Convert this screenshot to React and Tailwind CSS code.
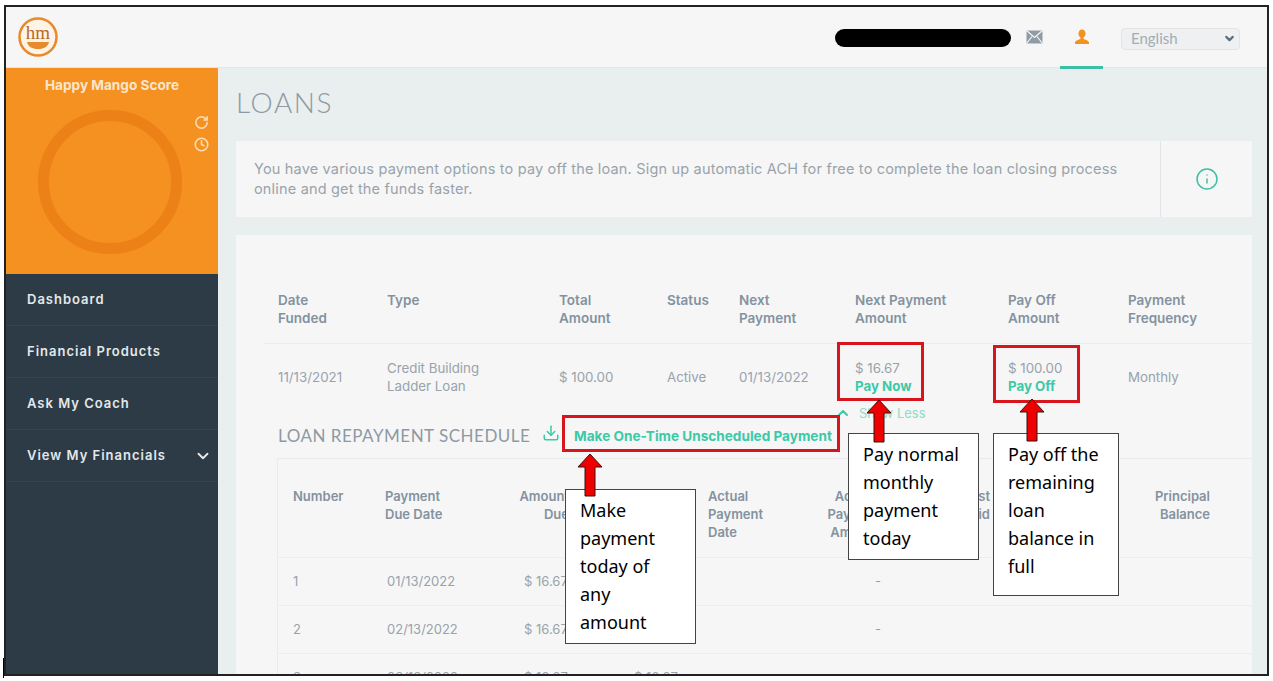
import React from "react";
import { ChevronDown, ChevronUp, Clock, Download, Info, RotateCw } from "lucide-react";

const navItems = ["Dashboard", "Financial Products", "Ask My Coach", "View My Financials"];

const loanCols = "grid grid-cols-[109px_172px_108px_72px_116px_153px_120px_1fr]";
const schedCols = "grid grid-cols-[92px_110px_74px_139px_112px_70px_100px_220px_1fr]";

const Logo = () => (
  <svg width="42" height="42" viewBox="0 0 42 42">
    <circle cx="21" cy="21" r="18.5" fill="#fdf3e6" stroke="#e8892b" strokeWidth="2.5" />
    <text x="21" y="23" textAnchor="middle" fontFamily="Liberation Serif, serif" fontSize="19" fill="#b9691f">
      hm
    </text>
    <path d="M10 26h22c-1 4.500-5 7-11 7s-10-2.500-11-7z" fill="#e8892b" />
  </svg>
);

const MailIcon = () => (
  <svg width="17" height="14" viewBox="0 0 17 14">
    <rect x="0.500" y="0.500" width="16" height="13" fill="#8f9ba5" />
    <path d="M0.500 0.500l8 7 8-7M0.500 13.500l5.500-7M16.500 13.500l-5.500-7" fill="none" stroke="#f6f6f6" strokeWidth="1.200" />
  </svg>
);

const UserIcon = () => (
  <svg width="16" height="16" viewBox="0 0 16 16">
    <path d="M8 0.500c2.200 0 3.500 1.700 3.500 4 0 2-1 3.500-2 4.300v1.200c2.500 1 5.500 1.800 5.500 3.500v1.500H1v-1.500c0-1.700 3-2.500 5.500-3.500V8.800c-1-.8-2-2.300-2-4.300 0-2.300 1.300-4 3.500-4z" fill="#f39220" />
  </svg>
);

const UpArrow = ({ className }) => (
  <svg className={className} width="26" height="44" viewBox="0 0 26 44">
    <path d="M13 1L25 14H18V43H8V14H1z" fill="#ee0000" stroke="#3a1010" strokeWidth="1" />
  </svg>
);

const Callout = ({ className, lines }) => (
  <div className={`absolute bg-white border border-[#444] pl-[14px] pt-[6px] text-[18px] leading-[28px] text-black font-['Noto_Sans',sans-serif] ${className}`}>
    {lines.map((l) => (
      <div key={l}>{l}</div>
    ))}
  </div>
);

const App = () => {
  return (
    <div className="relative w-[1273px] h-[681px] overflow-hidden bg-white pt-[5px] pl-[4px] font-['Inter',sans-serif]">
      <div className="w-[1265px] h-[671px] border-2 border-[#222] flex flex-col overflow-hidden bg-[#e9eeef]">
        {/* Top bar */}
        <header className="relative h-[61px] shrink-0 bg-[#f6f6f6] border-b border-[#e3e6e7] flex items-center pl-[11px]">
          <Logo />
          <div className="ml-auto flex items-center pr-[27px]">
            <div className="w-[176px] h-[18px] mt-[2px] rounded-full bg-black" />
            <div className="ml-[15px] w-[17px] flex justify-center"><MailIcon /></div>
            <div className="ml-[30px] w-[17px] flex justify-center"><UserIcon /></div>
            <div className="ml-[31px] mt-[3px] w-[119px] h-[22px] rounded bg-[#eef0f1] border border-[#e2e5e7] flex items-center justify-between pl-[9px] pr-[3px] font-['Lato',sans-serif] text-[15px] text-[#a3acb4]">
              English
              <ChevronDown size={13} strokeWidth={4} className="text-[#5f6f7c]" />
            </div>
          </div>
          <div className="absolute right-[164px] bottom-[-2px] w-[43px] h-[3px] bg-[#3cc0a5]" />
        </header>

        <div className="flex flex-1 min-h-0">
          {/* Sidebar */}
          <aside className="w-[212px] shrink-0 bg-[#2c3b46] flex flex-col">
            <div className="relative h-[206px] bg-[#f59121] pt-[7px] text-center">
              <div className="text-[13.600px] leading-[20px] font-bold text-[#fbe6cc]">Happy Mango Score</div>
              <div className="mt-[15px] ml-[32px] w-[144px] h-[144px] rounded-full border-[11px] border-[#ec8118]" />
              <div className="absolute right-[9px] top-[47px] flex flex-col items-center gap-[7px] text-[#fbdcb5]">
                <RotateCw size={15} strokeWidth={2.5} />
                <Clock size={15} strokeWidth={2.5} />
              </div>
            </div>
            <nav>
              {navItems.map((item, i) => (
                <div key={item} className="h-[52px] pl-[21px] pr-[5px] flex items-center justify-between border-b border-[#334350] text-[13px] font-semibold tracking-[1px] text-[#e4e8ea]">
                  {item}
                  {i === 3 && <ChevronDown size={18} strokeWidth={2.500} className="mr-[1px]" />}
                </div>
              ))}
            </nav>
          </aside>

          {/* Main */}
          <main className="flex-1 min-w-0 pl-[18px] pr-[15px] overflow-hidden">
            <h1 className="h-[73px] pt-[15px] font-['Lato',sans-serif] font-light text-[28px] leading-[38px] tracking-[1.6px] text-[#8d99a4]">LOANS</h1>

            <div className="h-[76px] bg-[#f6f6f6] flex text-[#98a3ac]">
              <div className="w-[925px] border-r border-[#e3e6e7] pl-[18px] pt-[18px] text-[14.500px] tracking-[0.18px] leading-[20px] whitespace-nowrap">
                You have various payment options to pay off the loan. Sign up automatic ACH for free to complete the loan closing process
                <br />
                online and get the funds faster.
              </div>
              <div className="flex-1 flex items-center justify-center pb-[1px]">
                <Info size={24} strokeWidth={1.500} className="text-[#3cc0a5]" />
              </div>
            </div>

            <section className="mt-[18px] h-[500px] bg-[#f6f6f6] pl-[28px]">
              {/* Loan table */}
              <div className={`${loanCols} pl-[14px] pt-[56px] h-[109px] border-b border-[#eaecee] text-[13.500px] leading-[18px] font-semibold text-[#8492a0]`}>
                {[["Date", "Funded"], ["Type"], ["Total", "Amount"], ["Status"], ["Next", "Payment"], ["Next Payment", "Amount"], ["Pay Off", "Amount"], ["Payment", "Frequency"]].map((h) => (
                  <div key={h[0] + h.length + h[1]}>
                    {h.map((t) => (
                      <div key={t}>{t}</div>
                    ))}
                  </div>
                ))}
              </div>
              <div className={`${loanCols} pl-[14px] h-[65px] items-center text-[13.300px] leading-[18px] text-[#98a3ac]`}>
                <div>11/13/2021</div>
                <div>Credit Building<br />Ladder Loan</div>
                <div>$ 100.00</div>
                <div>Active</div>
                <div>01/13/2022</div>
                <div>
                  $ 16.67
                  <div className="font-bold text-[#3cc9a8]">Pay Now</div>
                </div>
                <div>
                  $ 100.00
                  <div className="font-bold text-[#3cc9a8]">Pay Off</div>
                </div>
                <div>Monthly</div>
              </div>

              {/* Schedule heading */}
              <div className="relative h-[49px] pl-[14px] pt-[14px] flex items-start">
                <span className="font-['Lato',sans-serif] text-[17px] leading-[26px] tracking-[0.5px] text-[#8d99a4]">LOAN REPAYMENT SCHEDULE</span>
                <Download size={18} strokeWidth={2} className="absolute left-[278px] top-[15px] text-[#3cc9a8]" />
                <span className="absolute left-[310px] top-[14px] whitespace-nowrap text-[13.600px] leading-[26px] font-bold text-[#3cc9a8]">Make One-Time Unscheduled Payment</span>
                <div className="absolute left-[571px] top-[-5px] flex items-center gap-[8px] text-[13px] leading-[18px] text-[#8fdcc8]">
                  <ChevronUp size={16} strokeWidth={3} className="text-[#3cc9a8]" />
                  Show Less
                </div>
              </div>

              {/* Schedule table */}
              <div className="ml-[13px] border-t border-l border-[#e9ebec] text-[13px] leading-[18px]">
                <div className={`${schedCols} h-[99px] pl-[15px] pt-[28px] border-b border-[#eceeef] font-semibold text-[#8492a0]`}>
                  <div>Number</div>
                  <div>Payment<br />Due Date</div>
                  <div className="text-right">Amount<br />Due</div>
                  <div />
                  <div>Actual<br />Payment<br />Date</div>
                  <div className="text-center">Actual<br />Payment<br />Amount</div>
                  <div className="text-right">Interest<br />Paid</div>
                  <div className="text-right">Principal<br />Balance</div>
                </div>
                {[["1", "01/13/2022", "-"], ["2", "02/13/2022", "-"], ["3", "03/13/2022", ""]].map((r) => (
                  <div key={r[0]} className={`${schedCols} h-[48px] pl-[15px] pb-[2px] items-center border-b border-[#eceeef] text-[#98a3ac]`}>
                    <div>{r[0]}</div>
                    <div className="pl-[2px]">{r[1]}</div>
                    <div className="pl-[29px] whitespace-nowrap">$ 16.67</div>
                    <div className="pl-[65px]">{r[0] === "3" ? "$ 16.67" : ""}</div>
                    <div />
                    <div className="text-right pr-[9px]">{r[2]}</div>
                  </div>
                ))}
              </div>
            </section>
          </main>
        </div>
      </div>

      {/* Annotations over the screenshot */}
      <div className="absolute left-[562px] top-[415px] w-[278px] h-[37px] border-[3px] border-[#d8141c]" />
      <div className="absolute left-[837px] top-[342px] w-[87px] h-[59px] border-[3px] border-[#d8141c]" />
      <div className="absolute left-[993px] top-[345px] w-[87px] h-[58px] border-[3px] border-[#d8141c]" />
      <Callout className="left-[565px] top-[489px] w-[131px] h-[155px]" lines={["Make", "payment", "today of", "any", "amount"]} />
      <Callout className="left-[848px] top-[433px] w-[131px] h-[127px]" lines={["Pay normal", "monthly", "payment", "today"]} />
      <Callout className="left-[993px] top-[433px] w-[126px] h-[163px]" lines={["Pay off the", "remaining", "loan", "balance in", "full"]} />
      <UpArrow className="absolute left-[577px] top-[453px]" />
      <UpArrow className="absolute left-[866px] top-[399px]" />
      <UpArrow className="absolute left-[1019px] top-[398px]" />
      <div className="absolute left-[3px] top-[658px] w-[1px] h-[20px] bg-black" />
    </div>
  );
};

export default App;
